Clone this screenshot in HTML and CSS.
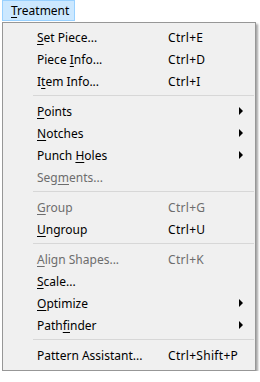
FILE: index.html
```html
<!DOCTYPE html>
<html lang="en">

<head>
    <meta charset="UTF-8">
    <meta name="viewport" content="width=device-width, initial-scale=1.0">
    <title>Treatment Menu</title>

    <link rel="stylesheet" href="styles.css">
</head>

<body>
    <div class="menubar">
        <span class="menu-title"><u>T</u>reatment</span>
    </div>

    <div class="menu">
        <div class="item"><span class="label"><u>S</u>et Piece...</span><span class="key">Ctrl+E</span></div>
        <div class="item"><span class="label">Piece <u>I</u>nfo...</span><span class="key">Ctrl+D</span></div>
        <div class="item"><span class="label">I<u>t</u>em Info...</span><span class="key">Ctrl+I</span></div>
        <div class="sep"></div>
        <div class="item"><span class="label"><u>P</u>oints</span><span class="key"></span><span class="arrow"></span></div>
        <div class="item"><span class="label"><u>N</u>otches</span><span class="key"></span><span class="arrow"></span></div>
        <div class="item"><span class="label">Punch <u>H</u>oles</span><span class="key"></span><span class="arrow"></span></div>
        <div class="item disabled"><span class="label">Seg<u>m</u>ents...</span><span class="key"></span></div>
        <div class="sep"></div>
        <div class="item disabled"><span class="label"><u>G</u>roup</span><span class="key">Ctrl+G</span></div>
        <div class="item"><span class="label"><u>U</u>ngroup</span><span class="key">Ctrl+U</span></div>
        <div class="sep"></div>
        <div class="item disabled"><span class="label"><u>A</u>lign Shapes...</span><span class="key">Ctrl+K</span></div>
        <div class="item"><span class="label"><u>S</u>cale...</span><span class="key"></span></div>
        <div class="item"><span class="label"><u>O</u>ptimize</span><span class="key"></span><span class="arrow"></span></div>
        <div class="item"><span class="label">Path<u>f</u>inder</span><span class="key"></span><span class="arrow"></span></div>
        <div class="sep"></div>
        <div class="item"><span class="label">Pattern Assistant...</span><span class="key">Ctrl+Shift+P</span></div>
    </div>
</body>

</html>
```

FILE: styles.css
```css
* {
    margin: 0px;
    padding: 0px;
    box-sizing: border-box;
}

body {
    background-color: white;
    font-family: "Noto Sans", "Liberation Sans", sans-serif;
    font-size: 12px;
    color: black;
    padding: 0px 0px 0px 2px;
}

u {
    text-decoration: underline;
    text-underline-offset: 2px;
}

.menubar {
    height: 22px;
    display: flex;
}

.menu-title {
    width: 73px;
    height: 21px;
    padding-left: 8px;
    line-height: 19px;
    background-color: #cce8ff;
    border: 1px solid #99d1ff;
}

.menu {
    width: 254px;
    height: 349px;
    padding: 3px 0px;
    background-color: #f0f0f0;
    border: 1px solid #979797;
    box-shadow: 2px 2px 2px rgba(0, 0, 0, 0.35);
}

.item {
    height: 22px;
    display: grid;
    grid-template-columns: 165px 1fr 16px;
    align-items: center;
}

.label {
    padding-left: 34px;
}

.key {
    letter-spacing: 0.3px;
}

.disabled {
    color: #6d6d6d;
}

.arrow {
    width: 0px;
    height: 0px;
    border-top: 4px solid transparent;
    border-bottom: 4px solid transparent;
    border-left: 4px solid black;
}

.sep {
    height: 8px;
    margin: 0px 1px 0px 30px;
    padding-top: 3px;
}

.sep::after {
    content: "";
    display: block;
    height: 1px;
    background-color: #d7d7d7;
}
```
